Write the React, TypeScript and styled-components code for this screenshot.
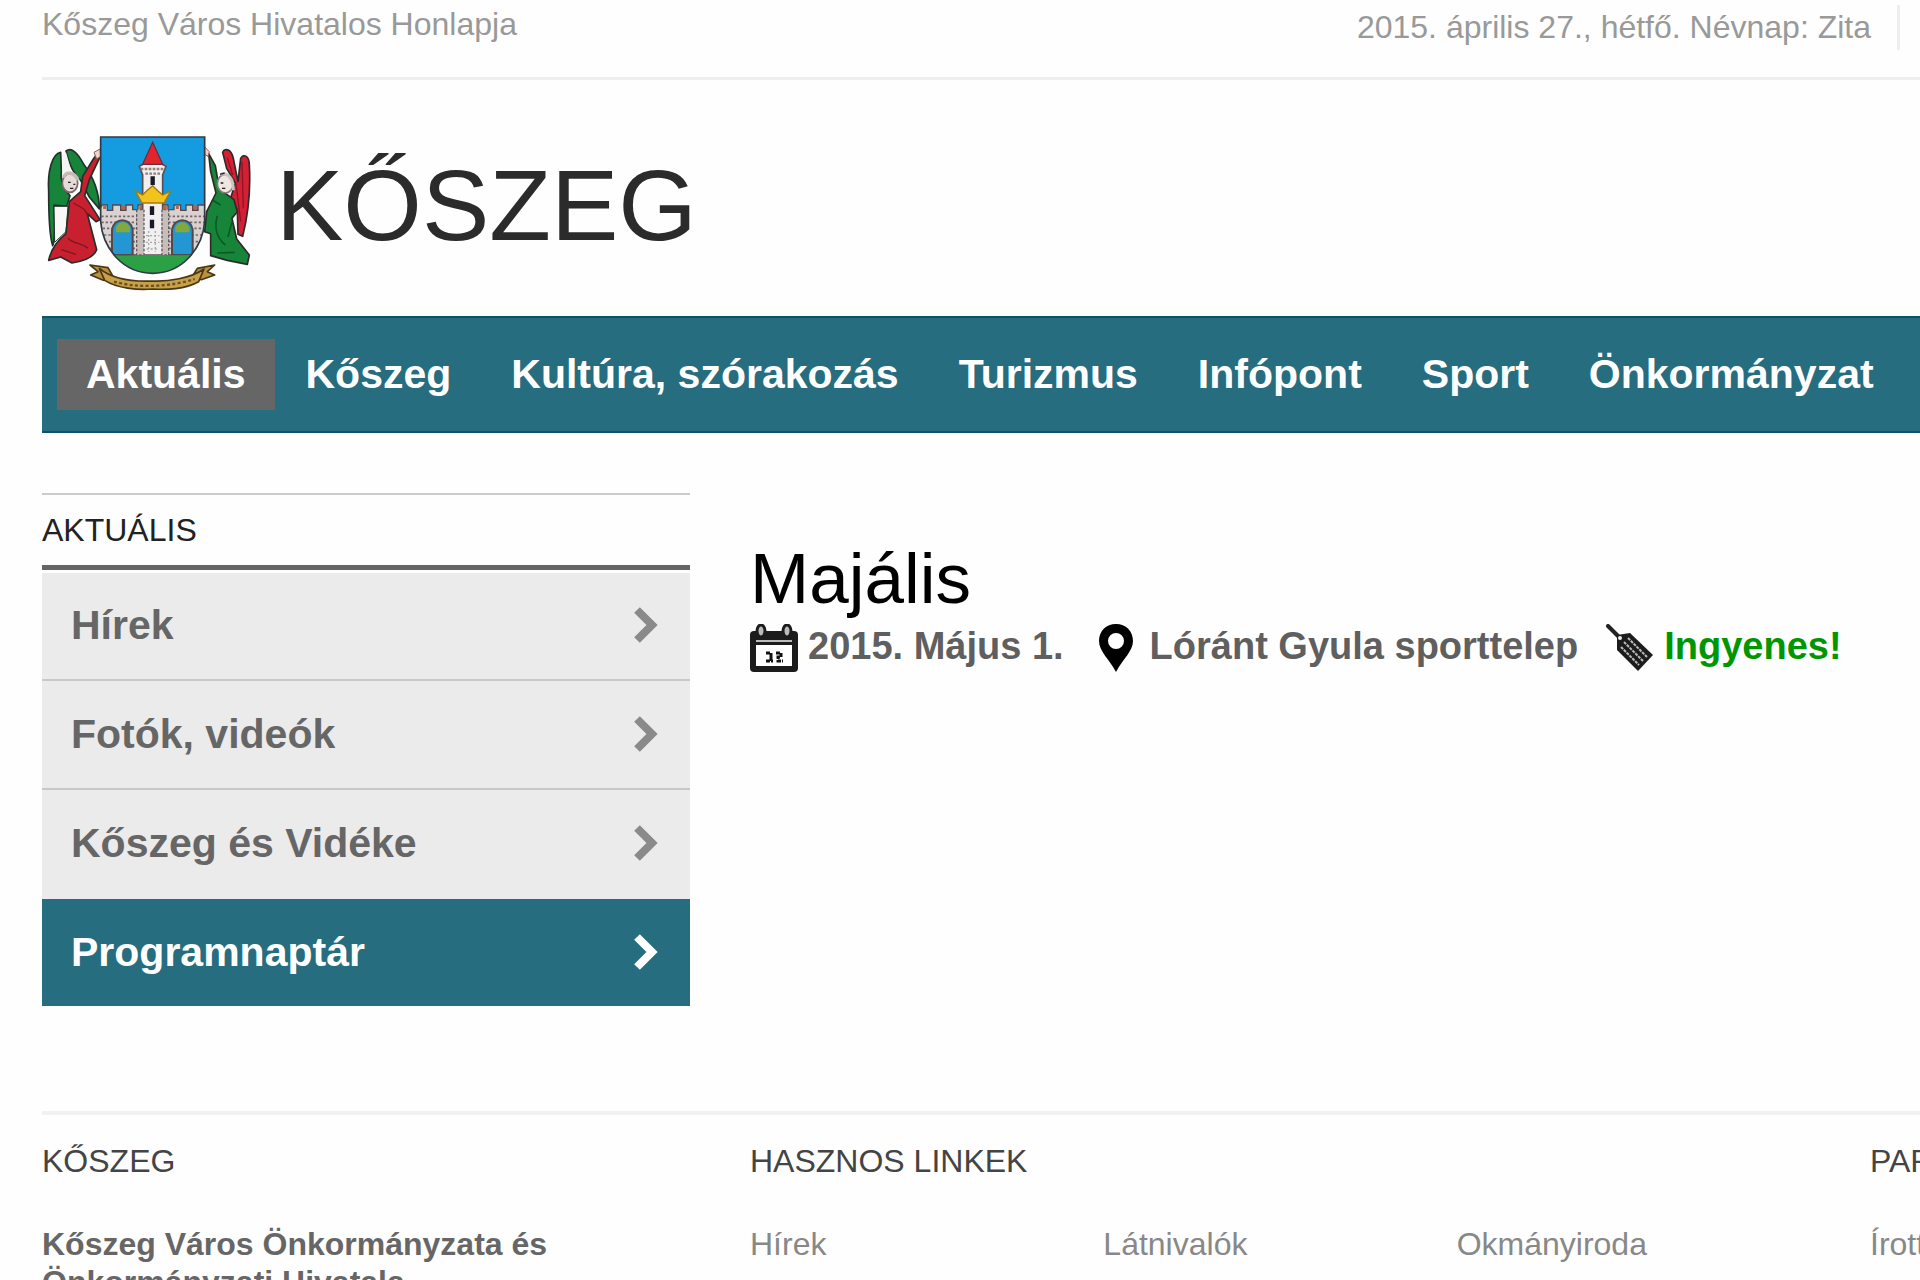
import React from "react";
import styled, { createGlobalStyle } from "styled-components";

const teal = "#266d80";

const GlobalStyle = createGlobalStyle`
  *, *::before, *::after { box-sizing: border-box; }
  body {
    margin: 0;
    background: #fefefe;
    color: #666;
    font-family: "Liberation Sans", Arial, Helvetica, sans-serif;
    font-size: 32px;
    line-height: 38px;
  }
  h1, h2, p, ul { margin: 0; padding: 0; font-weight: normal; }
  ul { list-style: none; }
  a { color: inherit; text-decoration: none; }
`;

const Page = styled.div`
  height: 100vh;
  overflow: hidden;
  padding-left: 42px;
`;

const TopBar = styled.div`
  display: flex;
  justify-content: space-between;
  align-items: flex-start;
  height: 80px;
  padding: 5px 20px 0 0;
  border-bottom: 3px solid #eee;
  color: #999;
`;

const Today = styled.p`
  padding: 3px 26px 4px 0;
  border-right: 3px solid #eee;
`;

const Brand = styled.a`
  display: flex;
  align-items: flex-start;
  gap: 24px;
  height: 236px;
  padding: 53px 0 0 4px;
  color: #2b2b2b;
`;

const BrandName = styled.span`
  font-size: 101px;
  line-height: 144px;
`;

const Crest = styled.svg`
  width: 206px;
  height: 160px;
`;

const Nav = styled.nav`
  display: flex;
  gap: 2px;
  padding: 21px 15px;
  background: ${teal};
  border: solid #0a5568;
  border-width: 2px 0;
`;

const NavLink = styled.a<{ $active?: boolean }>`
  padding: 0 29px;
  font-size: 41px;
  font-weight: bold;
  line-height: 71px;
  white-space: nowrap;
  color: #fff;
  background: ${(p) => (p.$active ? "#666" : "transparent")};
`;

const Columns = styled.main`
  display: grid;
  grid-template-columns: 648px 1fr;
  gap: 60px;
  padding: 60px 0 105px;
`;

const SideTitle = styled.h2`
  height: 77px;
  padding-top: 16px;
  border-top: 2px solid #ccc;
  border-bottom: 5px solid #666;
  font-size: 32px;
  color: #222;
`;

const SideList = styled.ul`
  border-top: 3px solid #fefefe;
`;

const SideLink = styled.a<{ $active?: boolean }>`
  display: flex;
  align-items: center;
  justify-content: space-between;
  height: ${(p) => (p.$active ? 107 : 109)}px;
  padding: 0 32px 1px 29px;
  border-bottom: ${(p) => (p.$active ? "0" : "2px solid #c8c8c8")};
  background: ${(p) => (p.$active ? teal : "#ebebeb")};
  color: ${(p) => (p.$active ? "#fff" : "#666")};
  font-size: 41px;
  font-weight: bold;

  li:first-child > & { height: 108px; padding-bottom: 3px; }
  li:nth-child(3) > & { border-bottom-color: #ebebeb; }
  svg { color: ${(p) => (p.$active ? "#fff" : "#8a8a8a")}; }
`;

const Article = styled.article`
  padding-top: 46px;
`;

const ArticleTitle = styled.h1`
  margin-bottom: 5px;
  font-size: 71px;
  line-height: 80px;
  color: #000;
`;

const Meta = styled.ul`
  display: flex;
  gap: 28px;
`;

const MetaItem = styled.li<{ $free?: boolean }>`
  display: flex;
  gap: 10px;
  color: ${(p) => (p.$free ? "#009600" : "#5f5f5f")};
  font-size: 38px;
  font-weight: bold;
  line-height: 45px;
  white-space: nowrap;
`;

const Footer = styled.footer`
  display: grid;
  grid-template-columns: 648px 1fr 50px;
  column-gap: 60px;
  padding-top: 27px;
  border-top: 4px solid #f1f1f1;
  color: #888;
`;

const FooterTitle = styled.h2`
  margin-bottom: 45px;
  font-size: 32px;
  white-space: nowrap;
  color: #444;
`;

const Address = styled.p`
  max-width: 580px;
  font-weight: bold;
  color: #666;
`;

const FooterLinks = styled.ul`
  display: grid;
  grid-template-columns: repeat(3, 1fr);
  white-space: nowrap;
`;

const Chevron = () => (
  <svg width="24" height="38" viewBox="0 0 24 38" fill="none" stroke="currentColor" strokeWidth="8" aria-hidden="true">
    <path d="M3 4 L18 19 L3 34" />
  </svg>
);

const CalendarIcon = () => (
  <svg width="48" height="48" viewBox="0 0 48 48" aria-hidden="true">
    <rect x="0" y="7" width="48" height="41" rx="4" fill="#1c1c1c" />
    <ellipse cx="11" cy="7" rx="4" ry="6" fill="#bbb" stroke="#1c1c1c" strokeWidth="3" />
    <ellipse cx="37" cy="7" rx="4" ry="6" fill="#bbb" stroke="#1c1c1c" strokeWidth="3" />
    <path d="M6 17H42" stroke="#bbb" strokeWidth="2" />
    <rect x="6" y="21" width="36" height="21" fill="#fff" />
    <path
      d="M16 29H21V33M21 33V37M16 37H23M26 29H31V33H28V37H33"
      fill="none"
      stroke="#111"
      strokeWidth="3"
      strokeDasharray="4 1"
    />
  </svg>
);

const PinIcon = () => (
  <svg width="48" height="48" viewBox="0 0 48 48" aria-hidden="true">
    <path
      fillRule="evenodd"
      d="M24 0C14 0 7 7 7 17C7 27 17 35 24 48C31 35 41 27 41 17C41 7 34 0 24 0ZM24 9A8 8 0 1 1 24 25A8 8 0 1 1 24 9Z"
      fill="#000"
    />
  </svg>
);

const TagIcon = () => (
  <svg width="48" height="48" viewBox="0 0 48 48" aria-hidden="true">
    <path d="M2 2L13 13" stroke="#222" strokeWidth="4" strokeLinecap="round" />
    <path d="M11 11L24 9L47 31L32 47L11 26Z" fill="#1c1c1c" />
    <circle cx="14" cy="14" r="2" fill="#eee" />
    <path
      d="M22 14L41 33M18 18L37 37M15 23L33 41"
      stroke="#bbb"
      strokeWidth="2"
      strokeDasharray="3 1"
    />
  </svg>
);

const CoatOfArms = () => (
  <Crest viewBox="46 34 618 480" role="img" aria-label="Kőszeg címere">
    <defs>
      <clipPath id="shield">
        <path d="M210 46H522V300C516 380 455 455 366 455C277 455 216 380 210 300Z" />
      </clipPath>
    </defs>

    {/* left angel */}
    <g stroke="#24302a" strokeWidth="5" strokeLinejoin="round">
      <path d="M90 92C64 96 50 150 54 210C54 280 56 340 66 372C76 350 70 300 70 250L108 254L118 222C100 204 88 178 92 146Z" fill="#16853a" />
      <path d="M106 88C122 76 140 92 158 126C184 160 206 206 206 262L176 226L150 176C134 160 118 140 106 88Z" fill="#16853a" />
      <path d="M94 100L106 92L122 148L96 156Z" fill="#f4f4f2" stroke="none" />
      <path d="M70 254H112L106 330L72 362Z" fill="#f8f8f6" strokeWidth="3" />
      <path d="M200 96L206 110L176 174L162 222L208 294L196 300L170 276L184 330L198 384C190 408 160 418 124 424L90 406L54 416C62 380 86 352 106 336L116 240L150 210L156 164L188 112Z" fill="#c8202f" />
      <path d="M128 244L160 262L172 282M112 350C132 370 150 360 172 380M92 384L136 398" fill="none" stroke="#7c1820" strokeWidth="4" />
      <ellipse cx="118" cy="184" rx="23" ry="28" fill="#e7dcd7" stroke="#776b6b" />
      <path d="M98 168C106 146 134 152 142 176" fill="none" stroke="#c7bab5" strokeWidth="10" />
      <path d="M112 182H120M128 188H134M118 200H128" stroke="#222" strokeWidth="4" />
      <path d="M190 92L208 82L210 104L198 112Z" fill="#f4d3c8" stroke="#9a5c55" strokeWidth="3" />
    </g>

    {/* right angel */}
    <g stroke="#31282a" strokeWidth="5" strokeLinejoin="round">
      <path d="M576 92C584 76 602 84 608 110L622 180L630 110C640 94 656 104 656 130C660 200 652 280 636 344L622 338L620 264L598 236L614 184L588 140Z" fill="#d61f35" />
      <path d="M616 186L630 300M634 120L638 260M590 108L606 160" fill="none" stroke="#8b1723" strokeWidth="4" />
      <path d="M534 96L554 132L560 168L580 212L610 234L620 270L604 290L618 352L656 400L650 428L590 416L540 402V336L522 330L528 270L556 214L540 150Z" fill="#16853a" />
      <path d="M546 236L570 250M560 282C550 316 556 346 584 370M604 300L592 346M560 394L612 392" fill="none" stroke="#0a5a24" strokeWidth="5" />
      <ellipse cx="584" cy="186" rx="24" ry="28" fill="#eee6e0" stroke="#847878" />
      <path d="M570 158C590 150 608 170 608 206" fill="none" stroke="#cfc5bf" strokeWidth="9" />
      <path d="M568 158L582 154M570 184H578M574 200H584" stroke="#222" strokeWidth="4" />
      <path d="M520 74L536 90L532 104L522 98Z" fill="#f4d3c8" stroke="#9a5c55" strokeWidth="3" />
    </g>

    {/* shield */}
    <g clipPath="url(#shield)">
      <rect x="206" y="40" width="320" height="420" fill="#159bdf" />
      <path d="M200 276L214 250H230V266H246V250H270V266H286V250H306V264H322V250H336V400H396V250H412V264H430V250H450V266H466V250H486V266H502V250H530V400H200Z" fill="#d9d2d0" stroke="#55484a" strokeWidth="4" />
      <path
        d="M212 284H334M212 302H334M216 320H330M220 340H250M222 360H250M236 380H250M306 340H334M306 360H334M306 380H334M400 284H522M400 302H522M400 320H516M400 340H424M400 360H424M400 380H424M482 340H512M482 360H508M482 380H500"
        stroke="#75686a"
        strokeWidth="5"
        strokeDasharray="7 6"
      />
      <path d="M222 250V262M278 250V262M330 250V262M404 250V262M440 250V262M494 250V262" stroke="#b4664e" strokeWidth="9" />
      <path d="M244 400V324C250 286 300 286 306 324V400Z" fill="#2596d4" stroke="#55484a" strokeWidth="6" />
      <path d="M424 400V324C430 286 480 286 486 324V400Z" fill="#2596d4" stroke="#55484a" strokeWidth="6" />
      <path d="M256 332V318C262 296 290 296 298 318V332Z" fill="#83a83b" />
      <path d="M434 332V318C440 296 468 296 476 318V332Z" fill="#83a83b" />
      <path d="M336 160V400H396V160L406 134L392 126H340L326 134Z" fill="#f1eff0" stroke="#5a4f52" strokeWidth="5" />
      <path d="M330 142H402M344 156H392" stroke="#96817d" strokeWidth="7" strokeDasharray="8 4" />
      <path d="M366 62L396 128H336Z" fill="#e0262c" stroke="#742a35" strokeWidth="4" />
      <path d="M318 264V400H340V264ZM394 264V400H414V264Z" fill="#c7bdbb" stroke="#65595b" strokeWidth="4" strokeDasharray="8 5" />
      <path d="M366 164V190M364 254V280M364 294V320" stroke="#171a24" strokeWidth="13" />
      <path d="M346 342H386M346 362H386M348 382H384M354 328V390M374 328V390" stroke="#aaa" strokeWidth="4" strokeDasharray="6 6" />
      <path d="M314 208L336 220L350 206L366 192L382 208L396 220L420 208L400 244H334Z" fill="#f2c31c" stroke="#a6780d" strokeWidth="4" />
      <path d="M206 398C280 404 320 400 366 400C412 400 470 402 526 398V460H206Z" fill="#2ba044" />
    </g>
    <path d="M210 46H522V300C516 380 455 455 366 455C277 455 216 380 210 300Z" fill="none" stroke="#2e3a48" strokeWidth="5" />

    {/* motto ribbon */}
    <g stroke="#4b3714" strokeWidth="5" strokeLinejoin="round">
      <path d="M178 430L232 438L248 466L218 476L180 460L202 450Z" fill="#b8923f" />
      <path d="M552 430L500 440L484 466L512 474L552 460L530 450Z" fill="#b8923f" />
      <path d="M206 440C250 476 320 480 366 478C412 480 480 470 520 442L504 480C460 504 410 504 366 502C320 506 260 500 222 476Z" fill="#c7a048" />
      <path d="M250 480C320 500 420 496 492 472" fill="none" stroke="#6c5120" strokeWidth="7" strokeDasharray="9 7" />
    </g>
  </Crest>
);

const navItems = ["Aktuális", "Kőszeg", "Kultúra, szórakozás", "Turizmus", "Infópont", "Sport", "Önkormányzat"];
const sideItems = ["Hírek", "Fotók, videók", "Kőszeg és Vidéke", "Programnaptár"];
const usefulLinks = ["Hírek", "Látnivalók", "Okmányiroda"];

export default function App() {
  return (
    <>
      <GlobalStyle />
      <Page>
        <TopBar>
          <p>Kőszeg Város Hivatalos Honlapja</p>
          <Today>2015. április 27., hétfő. Névnap: Zita</Today>
        </TopBar>
        <header>
          <Brand href="#">
            <CoatOfArms />
            <BrandName>KŐSZEG</BrandName>
          </Brand>
          <Nav>
            {navItems.map((item, i) => (
              <NavLink key={item} href="#" $active={i === 0}>
                {item}
              </NavLink>
            ))}
          </Nav>
        </header>
        <Columns>
          <aside>
            <SideTitle>AKTUÁLIS</SideTitle>
            <SideList>
              {sideItems.map((item) => (
                <li key={item}>
                  <SideLink href="#" $active={item === "Programnaptár"}>
                    {item}
                    <Chevron />
                  </SideLink>
                </li>
              ))}
            </SideList>
          </aside>
          <Article>
            <ArticleTitle>Majális</ArticleTitle>
            <Meta>
              <MetaItem>
                <CalendarIcon />
                2015. Május 1.
              </MetaItem>
              <MetaItem>
                <PinIcon />
                Lóránt Gyula sporttelep
              </MetaItem>
              <MetaItem $free>
                <TagIcon />
                Ingyenes!
              </MetaItem>
            </Meta>
          </Article>
        </Columns>
        <Footer>
          <section>
            <FooterTitle>KŐSZEG</FooterTitle>
            <Address>Kőszeg Város Önkormányzata és Önkormányzati Hivatala</Address>
          </section>
          <section>
            <FooterTitle>HASZNOS LINKEK</FooterTitle>
            <FooterLinks>
              {usefulLinks.map((item) => (
                <li key={item}>
                  <a href="#">{item}</a>
                </li>
              ))}
            </FooterLinks>
          </section>
          <section>
            <FooterTitle>PARTNEREK</FooterTitle>
            <FooterLinks>
              <li>
                <a href="#">Írottkő</a>
              </li>
            </FooterLinks>
          </section>
        </Footer>
      </Page>
    </>
  );
}
